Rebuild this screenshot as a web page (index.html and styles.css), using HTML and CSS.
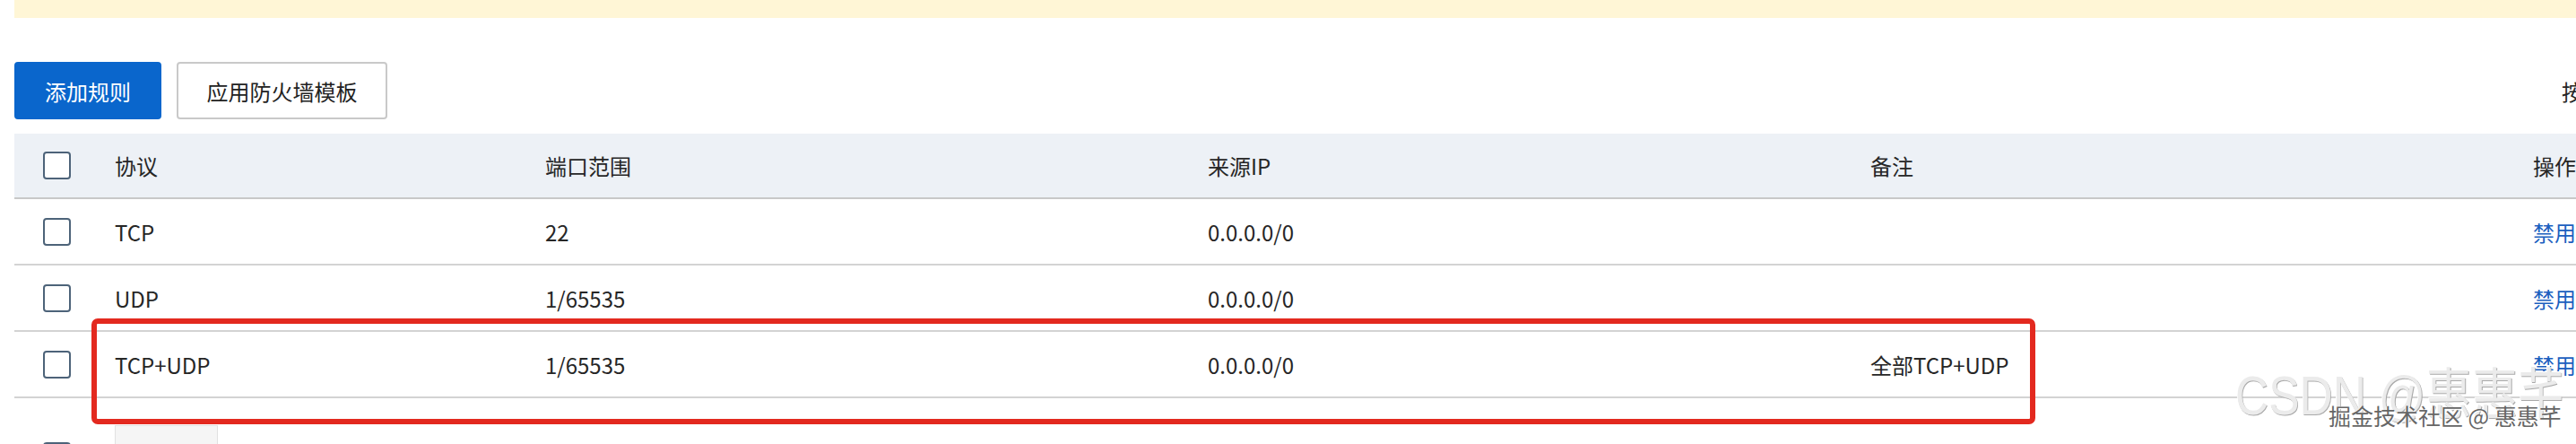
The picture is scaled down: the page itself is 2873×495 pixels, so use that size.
FILE: index.html
```
<!DOCTYPE html>
<html lang="zh-cmn-Hans">

<head>
    <meta charset="UTF-8">
    <meta name="viewport" content="width=device-width, initial-scale=1.0">
    <title>防火墙规则</title>
    <link rel="stylesheet" href="styles.css">
</head>

<body>
    <div class="page">
        <div class="notice"></div>

        <div class="toolbar">
            <button class="btn btn-primary">添加规则</button>
            <button class="btn">应用防火墙模板</button>
            <span class="toolbar-tip">按端口搜索</span>
        </div>

        <div class="rules">
            <div class="row head">
                <div class="cell check"><span class="cb"></span></div>
                <div class="cell">协议</div>
                <div class="cell">端口范围</div>
                <div class="cell">来源IP</div>
                <div class="cell">备注</div>
                <div class="cell">操作</div>
            </div>
            <div class="row">
                <div class="cell check"><span class="cb"></span></div>
                <div class="cell">TCP</div>
                <div class="cell">22</div>
                <div class="cell">0.0.0.0/0</div>
                <div class="cell"></div>
                <div class="cell"><a class="link">禁用</a></div>
            </div>
            <div class="row">
                <div class="cell check"><span class="cb"></span></div>
                <div class="cell">UDP</div>
                <div class="cell">1/65535</div>
                <div class="cell">0.0.0.0/0</div>
                <div class="cell"></div>
                <div class="cell"><a class="link">禁用</a></div>
            </div>
            <div class="row">
                <div class="cell check"><span class="cb"></span></div>
                <div class="cell">TCP+UDP</div>
                <div class="cell">1/65535</div>
                <div class="cell">0.0.0.0/0</div>
                <div class="cell">全部TCP+UDP</div>
                <div class="cell"><a class="link">禁用</a></div>
            </div>
            <div class="row edit">
                <div class="cell check"><span class="cb"></span></div>
                <div class="cell"><span class="select"></span></div>
                <div class="cell"></div>
                <div class="cell"></div>
                <div class="cell"></div>
                <div class="cell"></div>
            </div>
        </div>

        <!-- 标注框 -->
        <div class="mark"></div>

        <!-- 水印 -->
        <div class="wm-big">CSDN @惠惠芊</div>
        <div class="wm-small">掘金技术社区 @ 惠惠芊</div>
    </div>
</body>

</html>
```

FILE: styles.css
```
* {
    padding: 0;
    margin: 0;
    box-sizing: border-box;
}

body {
    background-color: #fff;
    overflow: hidden;
    font-family: "Noto Sans CJK SC", "Noto Sans", sans-serif;
    font-size: 24px;
    color: #262626;
}

.page {
    position: relative;
    width: 2961px;
    margin-left: 16px;
}

.notice {
    height: 20px;
    background-color: #fff6d6;
}

.toolbar {
    display: flex;
    align-items: center;
    gap: 17px;
    margin-top: 49px;
    height: 64px;
}

.btn {
    height: 64px;
    border: 2px solid #c9c9c9;
    border-radius: 4px;
    background-color: #fff;
    font: 24px "Noto Sans CJK SC", sans-serif;
    color: #222;
    width: 235px;
}

.btn-primary {
    width: 164px;
    border-color: #0a66cc;
    background-color: #0a66cc;
    color: #fff;
}

.toolbar-tip {
    margin-left: auto;
    width: 120px;
    white-space: nowrap;
    overflow: hidden;
}

.rules {
    margin-top: 16px;
}

.row {
    display: grid;
    grid-template-columns: 96px 480px 739px 739px 739px 168px;
    align-items: center;
    height: 74px;
    border-bottom: 2px solid #d3d3d3;
}

.row.head {
    height: 73px;
    background-color: #edf1f6;
    border-bottom-color: #c8c8c8;
}

.row.edit {
    height: 51px;
    align-items: start;
    border-bottom: none;
    overflow: hidden;
}

.row.edit .cell {
    padding-top: 30px;
}

.row.edit .cell.check {
    padding-top: 49px;
}

.cell {
    padding-left: 16px;
    white-space: nowrap;
}

.cell.check {
    padding-left: 32px;
    display: flex;
    align-items: center;
}

.cb {
    display: block;
    width: 31px;
    height: 31px;
    border: 2px solid #4d6379;
    border-radius: 4px;
    background-color: #fff;
}

.select {
    display: block;
    width: 115px;
    height: 70px;
    border: 1px solid #e1e1e1;
    background-color: #f5f5f5;
}

.link {
    color: #1b5fbf;
    cursor: pointer;
}

.mark {
    position: absolute;
    left: 86px;
    top: 355px;
    width: 2168px;
    height: 118px;
    border: 6px solid #e3291f;
    border-radius: 7px;
}

.wm-big {
    position: absolute;
    left: 2477px;
    top: 410px;
    font: 62px/62px "Liberation Sans Narrow", "Liberation Sans", "Noto Sans CJK SC", sans-serif;
    color: #ebebeb;
    text-shadow: 1px 1px 0 #a9a9a9, -1px -1px 0 #fff;
    white-space: nowrap;
    transform: scaleX(.83);
    transform-origin: left top;
}

.wm-small {
    position: absolute;
    left: 2581px;
    top: 448px;
    font: 25px/30px "Noto Sans CJK SC", sans-serif;
    color: #666;
    text-shadow: 1px 1px 0 #fff, -1px 0 0 #fff;
    white-space: nowrap;
}
```
